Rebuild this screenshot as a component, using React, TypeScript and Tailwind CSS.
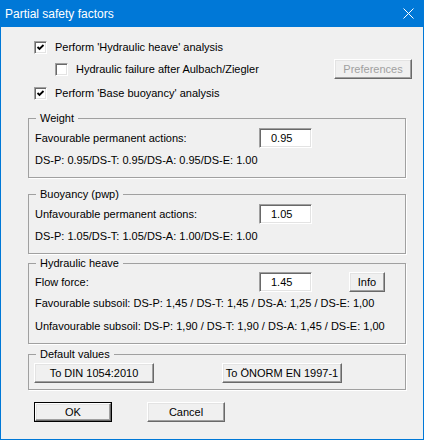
import React from 'react';

const raised =
  'border border-t-white border-l-white border-r-[#696969] border-b-[#696969] shadow-[inset_-1px_-1px_0_#a0a0a0,inset_1px_1px_0_#e3e3e3] bg-[#f0f0f0]';
const sunken =
  'border border-t-[#a0a0a0] border-l-[#a0a0a0] border-r-white border-b-white shadow-[inset_1px_1px_0_#696969,inset_-1px_-1px_0_#e3e3e3] bg-white';

function Btn({ label, w, disabled, def }: { label: string; w: string; disabled?: boolean; def?: boolean }) {
  if (def) {
    return (
      <div className={`${w} h-[20px] border border-black flex`}>
        <div className={`flex-1 ${raised} flex items-center justify-center`}>{label}</div>
      </div>
    );
  }
  return (
    <div className={`${w} h-[20px] ${raised} flex items-center justify-center ${disabled ? 'text-[#a0a0a0]' : ''}`}>
      {label}
    </div>
  );
}

function CheckBox({ checked }: { checked?: boolean }) {
  return (
    <div className={`w-[13px] h-[13px] shrink-0 ${sunken} flex items-center justify-center`}>
      {checked && (
        <svg width="9" height="9" viewBox="0 0 9 9">
          <path d="M1.5 4 L3.5 6 L7.5 2" fill="none" stroke="#000" strokeWidth="1.8" />
        </svg>
      )}
    </div>
  );
}

function Input({ value }: { value: string }) {
  return <div className={`w-[53px] h-[20px] ${sunken} pl-[11px] flex items-center`}>{value}</div>;
}

function Group({ title, className, children }: { title: string; className: string; children: React.ReactNode }) {
  return (
    <fieldset className={`w-[378px] border border-[#a0a0a0] shadow-[1px_1px_0_#fff] ${className}`}>
      <legend className="ml-[7px] px-[4px] h-[13px] leading-[13px]">{title}</legend>
      {children}
    </fieldset>
  );
}

export default function App() {
  return (
    <div
      className="w-[424px] h-[440px] bg-[#0078d7] flex flex-col"
      style={{ fontFamily: '"Liberation Sans", Arial, sans-serif' }}
    >
      <div className="h-[27px] shrink-0 flex items-center justify-between pl-[5px] pr-[10px] text-white text-[12px]">
        <span style={{ fontFamily: '"Segoe UI", "Liberation Sans", sans-serif' }}>Partial safety factors</span>
        <svg width="11" height="11" viewBox="0 0 11 11">
          <path d="M0.5 0.5 L10.5 10.5 M10.5 0.5 L0.5 10.5" stroke="#fff" strokeWidth="1" />
        </svg>
      </div>
      <div className="flex-1 mx-[1px] mb-[1px] bg-[#f0f0f0] pl-[27px] text-[11px] leading-[13px] text-black">
        <div className="mt-[14px] h-[13px] flex items-center gap-[8px] pl-[6px]">
          <CheckBox checked />
          <span>Perform 'Hydraulic heave' analysis</span>
        </div>
        <div className="mt-[5px] h-[20px] w-[384px] flex items-center">
          <div className="flex items-center gap-[8px] pl-[27px]">
            <CheckBox />
            <span>Hydraulic failure after Aulbach/Ziegler</span>
          </div>
          <div className="ml-auto">
            <Btn label="Preferences" w="w-[78px]" disabled />
          </div>
        </div>
        <div className="mt-[8px] h-[13px] flex items-center gap-[8px] pl-[6px]">
          <CheckBox checked />
          <span>Perform 'Base buoyancy' analysis</span>
        </div>

        <Group title="Weight" className="mt-[12px] pb-[10px]">
          <div className="px-[6px]">
            <div className="mt-[3px] h-[20px] flex items-center">
              <span className="w-[224px]">Favourable permanent actions:</span>
              <Input value="0.95" />
            </div>
            <div className="mt-[6px]">DS-P: 0.95/DS-T: 0.95/DS-A: 0.95/DS-E: 1.00</div>
          </div>
        </Group>

        <Group title="Buoyancy (pwp)" className="mt-[10px] pb-[10px]">
          <div className="px-[6px]">
            <div className="mt-[3px] h-[20px] flex items-center">
              <span className="w-[224px]">Unfavourable permanent actions:</span>
              <Input value="1.05" />
            </div>
            <div className="mt-[6px]">DS-P: 1.05/DS-T: 1.05/DS-A: 1.00/DS-E: 1.00</div>
          </div>
        </Group>

        <Group title="Hydraulic heave" className="mt-[3px] pb-[10px]">
          <div className="px-[6px]">
            <div className="mt-[2px] h-[20px] flex items-center">
              <span className="w-[224px]">Flow force:</span>
              <Input value="1.45" />
              <div className="ml-[37px]">
                <Btn label="Info" w="w-[36px]" />
              </div>
            </div>
            <div className="mt-[5px]">Favourable subsoil: DS-P: 1,45 / DS-T: 1,45 / DS-A: 1,25 / DS-E: 1,00</div>
            <div className="mt-[10px]">Unfavourable subsoil: DS-P: 1,90 / DS-T: 1,90 / DS-A: 1,45 / DS-E: 1,00</div>
          </div>
        </Group>

        <Group title="Default values" className="mt-[4px] pb-[6px]">
          <div className="mt-[2px] pl-[5px] flex gap-[68px]">
            <Btn label="To DIN 1054:2010" w="w-[120px]" />
            <Btn label="To ÖNORM EN 1997-1" w="w-[120px]" />
          </div>
        </Group>

        <div className="mt-[12px] pl-[6px] flex gap-[35px]">
          <Btn label="OK" w="w-[78px]" def />
          <Btn label="Cancel" w="w-[78px]" />
        </div>
      </div>
    </div>
  );
}
